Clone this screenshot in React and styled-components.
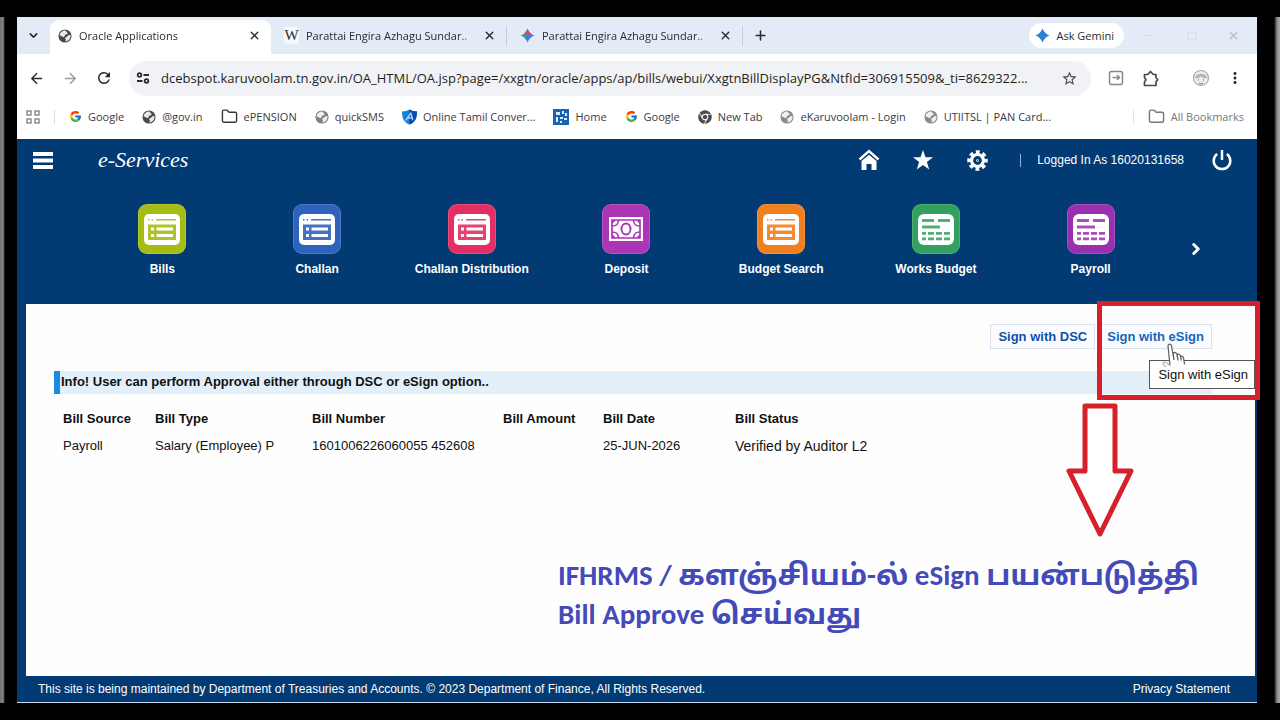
import React from "react";
import styled, { createGlobalStyle } from "styled-components";
import { FcGoogle } from "react-icons/fc";
import { FaChrome } from "react-icons/fa";
import { MdArrowBack, MdArrowForward, MdRefresh, MdStarBorder, MdMoreVert } from "react-icons/md";
import { ChevronDown, ChevronRight, Folder, Plus, X } from "lucide-react";

const GlobalStyle = createGlobalStyle`
  * {
    box-sizing: border-box;
  }
  body {
    margin: 0;
    background: #000;
  }
  button, input {
    font: inherit;
    color: inherit;
    border: 0;
    padding: 0;
    background: none;
  }
  a {
    color: inherit;
    text-decoration: none;
  }
  svg {
    display: block;
    flex: none;
  }
`;

const Device = styled.div`
  min-height: 100vh;
  display: flex;
  flex-direction: column;
  background: #000;
  border: solid #000;
  border-width: 17px 0;
`;
const Bezel = styled.div`
  flex: 1;
  display: flex;
  padding: 0 23px 0 17px;
  background:
    linear-gradient(to right, #6f6f6f 0, #8a8a8a 3px, #000 5px) left / 17px 100% no-repeat,
    linear-gradient(to left, #a8a8a8 0, #8a8a8a 3px, #000 6px) right / 23px 100% no-repeat;
`;
const Screen = styled.div`
  flex: 1;
  min-width: 0;
  display: flex;
  flex-direction: column;
  background: #fff;
  border-bottom: 1px solid #c9d8ea;
`;

/* browser */
const Browser = styled.header`
  font-family: "Open Sans", "Noto Sans", sans-serif;
  font-size: 11px;
  color: #2b2b2e;
`;
const TabStrip = styled.div`
  height: 37px;
  display: flex;
  align-items: center;
  background: #e3ebf7;
`;
const TabSearch = styled.button`
  width: 33px;
  height: 37px;
  display: grid;
  place-items: center;
`;
const Tab = styled.div`
  width: ${({ $active }) => ($active ? 221 : 236)}px;
  height: ${({ $active }) => ($active ? 34 : 20)}px;
  align-self: ${({ $active }) => ($active ? "flex-end" : "center")};
  display: flex;
  align-items: center;
  gap: 7px;
  padding: 0 8px ${({ $active }) => ($active ? 3 : 0)}px ${({ $active }) => ($active ? 8 : 13)}px;
  border-radius: ${({ $active }) => ($active ? "9px 9px 0 0" : 0)};
  background: ${({ $active }) => ($active ? "#fff" : "none")};
  border-right: ${({ $active }) => ($active ? 0 : "1px solid #c6cfdd")};
`;
const TabTitle = styled.span`
  flex: 1;
  white-space: nowrap;
  mask-image: linear-gradient(to left, transparent 0, #000 12px);
`;
const Wiki = styled.span`
  width: 15px;
  font: 15px "Liberation Serif", serif;
  text-align: center;
  background: #f6f8fb;
  border-radius: 3px;
`;
const IconButton = styled.button`
  width: ${({ $width }) => $width || 18}px;
  height: 20px;
  display: grid;
  align-items: center;
  justify-items: ${({ $align }) => $align || "center"};
  color: ${({ $color }) => $color || "#2b2b2e"};
`;
const Spacer = styled.div`
  flex: 1;
`;
const AskGemini = styled.button`
  height: 25px;
  display: flex;
  align-items: center;
  gap: 7px;
  padding: 0 10px 0 6px;
  margin-right: 11px;
  border-radius: 13px;
  background: #fff;
`;
const Toolbar = styled.div`
  height: 48px;
  display: flex;
  align-items: center;
  padding: 0 13px 0 10px;
  gap: 16px;
`;
const AddressBar = styled.label`
  flex: 1;
  min-width: 0;
  height: 35px;
  display: flex;
  align-items: center;
  gap: 11px;
  padding: 0 13px 0 7px;
  border-radius: 18px;
  background: #f1f2f5;
`;
const Address = styled.input`
  flex: 1;
  min-width: 0;
  font-size: 13px;
  color: #1f1f22;
  outline: 0;
`;
const Bookmarks = styled.nav`
  height: 37px;
  display: flex;
  align-items: center;
  gap: 14px;
  padding: 0 13px 8px 9px;
  white-space: nowrap;
`;
const BookmarkList = styled.div`
  flex: 1;
  display: flex;
  align-items: center;
  gap: 18px;
`;
const Bookmark = styled.a`
  display: flex;
  align-items: center;
  gap: 6px;
  color: ${({ $muted }) => ($muted ? "#77777b" : "#3a3a3d")};
`;
const Rule = styled.span`
  width: ${({ $width }) => $width || 1}px;
  height: ${({ $height }) => $height}px;
  background: ${({ $color }) => $color};
`;

/* application */
const Portal = styled.div`
  flex: 1;
  display: flex;
  flex-direction: column;
  background: #023a74;
  color: #fff;
  font-family: "Liberation Sans", Arial, sans-serif;
  font-size: 12px;
`;
const AppBar = styled.div`
  height: 42px;
  display: flex;
  align-items: center;
  padding: 0 24px 0 15px;
`;
const Brand = styled.h1`
  flex: 1;
  margin: 0 0 0 44px;
  font: italic 22px "Liberation Serif", serif;
`;
const BarIcons = styled.div`
  display: flex;
  align-items: center;
  gap: 32px;
`;
const BarButton = styled.button`
  width: 22px;
  height: 22px;
  display: grid;
  place-items: center;
`;
const LoggedIn = styled.span`
  margin: 0 27px 0 16px;
`;
const Launcher = styled.nav`
  display: flex;
  height: 123px;
  padding: 23px 50px 0 68px;
`;
const Tiles = styled.div`
  flex: 1;
  display: grid;
  grid-template-columns: repeat(7, 1fr);
  align-items: start;
`;
const TileLink = styled.a`
  display: flex;
  flex-direction: column;
  align-items: center;
  gap: 7px;
  font-weight: bold;
  line-height: 16px;
  white-space: nowrap;
`;
const TileIcon = styled.span`
  width: 48px;
  height: 50px;
  display: grid;
  place-items: center;
  border-radius: 9px;
  background: ${({ $color }) => $color};
  box-shadow: inset 0 0 0 1px rgba(255, 255, 255, 0.15);
`;
const NextButton = styled.button`
  width: 39px;
  height: 90px;
  display: flex;
  align-items: center;
  justify-content: flex-end;
  padding-right: 2px;
`;
const Panel = styled.main`
  position: relative;
  flex: 1;
  margin: 0 2px 0 9px;
  padding: 20px 43px 0 28px;
  background: #fefefe;
  color: #111;
`;
const Actions = styled.div`
  display: flex;
  justify-content: flex-end;
`;
const SignButton = styled.button`
  height: 25px;
  padding: 0 7px;
  border: 1px solid #d9e2ee;
  background: #fafcff;
  color: ${({ $hover }) => ($hover ? "#1766bb" : "#114fa8")};
  font-size: 13px;
  font-weight: bold;
  line-height: 22px;
  & + & {
    margin-left: 4px;
  }
`;
const Info = styled.p`
  margin: 22px 0 11px;
  height: 23px;
  padding-left: 1px;
  border-left: 6px solid #1a8be0;
  background: #e3eff9;
  font-size: 13px;
  font-weight: bold;
  line-height: 21px;
`;
const BillTable = styled.table`
  width: 100%;
  table-layout: fixed;
  border-collapse: collapse;
  font-size: 13px;
  th, td {
    height: 27px;
    padding: 0 0 0 9px;
    text-align: left;
    white-space: nowrap;
  }
`;
const Col = styled.col`
  width: ${({ $width }) => $width};
`;
const Cell = styled.td`
  font-size: ${({ $large }) => ($large ? 14 : 13)}px;
`;
const Footer = styled.footer`
  height: 26px;
  display: flex;
  align-items: center;
  justify-content: space-between;
  padding: 0 27px 0 21px;
`;

/* marks drawn over the panel */
const Tooltip = styled.div`
  position: absolute;
  top: 56px;
  right: 0;
  height: 29px;
  padding: 0 6px 0 8px;
  border: 1px solid #555;
  background: #fff;
  font-size: 13px;
  line-height: 27px;
`;
const Pointer = styled.svg`
  position: absolute;
  top: 39px;
  right: 68px;
`;
const Highlight = styled.div`
  position: absolute;
  top: -3px;
  right: -5px;
  width: 163px;
  height: 99px;
  border: 5px solid #d8202c;
`;
const Arrow = styled.svg`
  position: absolute;
  top: 98px;
  right: 121px;
`;
const Caption = styled.p`
  position: absolute;
  top: 252px;
  left: calc(100% - 697px);
  margin: 0;
  color: #444ab8;
  font: bold 29px / 39px Carlito, Lato, "Noto Sans Tamil", sans-serif;
  white-space: nowrap;
`;

const Globe = ({ color = "#4a4a4d", size = 14 }) => (
  <svg width={size} height={size} viewBox="0 0 16 16">
    <circle cx="8" cy="8" r="7.5" fill={color} />
    <path
      d="M8.5 1.6C5 1.6 2.2 4 1.8 7.2l3.4 1.6c1.4.5 2.8.2 2.6-1.3-.1-.8.6-1.2 1.6-1.3 1.5-.2 1.8-1 1.2-2zM14.3 7.2c-1.2-.7-2.2-.2-3 .5-.7.7-1 1.4-2 1.6-1.4.3-1.4 1.3-.6 2 .5.5.3 1.7-.3 2.9 3.6 0 6.2-3.2 5.9-7z"
      fill="#fff"
      opacity=".88"
    />
  </svg>
);

const Spark = ({ multi }) => (
  <svg width="15" height="15" viewBox="0 0 16 16">
    <defs>
      <linearGradient id="spark" x1="0" y1=".2" x2="1" y2=".6">
        <stop offset="0" stopColor="#f0b52b" />
        <stop offset=".3" stopColor="#35a866" />
        <stop offset=".55" stopColor="#3c7fe8" />
        <stop offset="1" stopColor="#3d86ee" />
      </linearGradient>
    </defs>
    <path
      d="M8 .5C9.200 4 12 6.800 15.500 8 12 9.200 9.200 12 8 15.500 6.800 12 4 9.200 .5 8 4 6.800 6.800 4 8 .5z"
      fill={multi ? "url(#spark)" : "#2f80d0"}
    />
    {multi && <path d="M8 .5C8.800 3.500 10 5.200 12 6.600L8 7.500 5.500 5.400C7 4.200 7.600 2.500 8 .5z" fill="#e2475b" />}
  </svg>
);

const Shield = () => (
  <svg width="15" height="16" viewBox="0 0 16 16">
    <path d="M8 0c2 1.400 5 2 8 2 0 7-2 11.500-8 14C2 13.500 0 9 0 2c3 0 6-.6 8-2z" fill="#1583e0" />
    <path d="M8 0c2 1.400 5 2 8 2 0 7-2 11.500-8 14z" fill="#0a4cae" />
    <path d="M4 11.500 9.500 4l2 7.500M6 9h5" fill="none" stroke="#bfe4ff" strokeWidth="1.300" />
  </svg>
);

const HomeSite = () => (
  <svg width="16" height="16" viewBox="0 0 16 16">
    <path d="M0 0h16v16H0z" fill="#1763b8" />
    <path d="M3 3h4v3H3zM9 2h2v3H9zM12 4h2v3h-2zM3 8h2v5H3zM7 8h3v2H7zM11 9h3v2h-3zM7 12h2v2H7z" fill="#d8ecff" />
  </svg>
);

const AppsGrid = () => (
  <svg width="14" height="14" viewBox="0 0 14 14" fill="none" stroke="#8f8f93" strokeWidth="1.500">
    <path d="M1 1h4v4H1zM9 1h4v4H9zM1 9h4v4H1zM9 9h4v4H9z" />
  </svg>
);

const SiteInfo = () => (
  <svg width="14" height="14" viewBox="0 0 14 14" fill="none" stroke="#2b2b2e" strokeWidth="1.800">
    <circle cx="3.500" cy="4" r="1.800" />
    <circle cx="10.500" cy="10" r="1.800" />
    <path d="M7.500 4H13M1 10h5.500" />
  </svg>
);

const SaveIcon = () => (
  <svg width="16" height="16" viewBox="0 0 16 16" fill="none" stroke="#88888c" strokeWidth="1.500">
    <rect x="1.500" y="1.500" width="13" height="13" rx="2" />
    <path d="M4.500 7.500h7M9 5l2.500 2.500L9 10" />
  </svg>
);

const Extension = () => (
  <svg width="17" height="17" viewBox="0 0 17 17" fill="none" stroke="#4b4b4f" strokeWidth="1.700" strokeLinejoin="round">
    <path d="M2.500 4.500h3.200L8.500 1.500l2.800 3H14v3.300l1.800 2-1.800 2v3.700H2.500v-3.800l1.500-1.900-1.500-2z" />
  </svg>
);

const Avatar = () => (
  <svg width="18" height="18" viewBox="0 0 18 18">
    <circle cx="9" cy="9" r="7.500" fill="#ededee" stroke="#a9a9ac" strokeWidth="1.200" />
    <path d="M3 9c1-5 11-6 12 0-4 1-5-1-6-2-1 2-3 3-6 2z" fill="#b5b5b8" />
    <path d="M6 11h1M11 11h1M7 14c1 1 3 1 4 0" stroke="#909094" strokeWidth="1.400" fill="none" />
  </svg>
);

const Menu = () => (
  <svg width="20" height="17" viewBox="0 0 20 17" fill="#fff">
    <path d="M0 0h20v4H0zM0 6.500h20v4H0zM0 13h20v4H0z" />
  </svg>
);

const Home = () => (
  <svg width="22" height="22" viewBox="0 0 22 22">
    <path d="M1.500 10.500 11 2.200l9.500 8.300" fill="none" stroke="#fff" strokeWidth="2.400" />
    <path d="M11 5.800 18.500 12v9h-5v-6h-5v6h-5v-9z" fill="#fff" />
  </svg>
);

const Star = () => (
  <svg width="20" height="20" viewBox="0 0 20 20">
    <path d="m10 0 2.500 7.300H20l-6.100 4.600 2.300 7.600L10 15l-6.200 4.500 2.300-7.600L0 7.300h7.500z" fill="#fff" />
  </svg>
);

const Gear = () => (
  <svg width="21" height="21" viewBox="0 0 21 21" fill="none" stroke="#fff">
    <circle cx="10.500" cy="10.500" r="8.500" strokeWidth="3.500" strokeDasharray="3.800 2.876" strokeDashoffset="1.900" />
    <circle cx="10.500" cy="10.500" r="6" strokeWidth="3.200" />
    <circle cx="10.500" cy="10.500" r="1" strokeWidth="1" />
  </svg>
);

const Power = () => (
  <svg width="20" height="21" viewBox="0 0 20 21" fill="none" stroke="#fff" strokeWidth="2.500">
    <path d="M5.200 4a8.300 8.300 0 1 0 9.600 0M10 0v10" />
  </svg>
);

const ListGlyph = ({ color }) => (
  <svg width="36" height="31" viewBox="0 0 36 31">
    <rect width="36" height="31" rx="5" fill="#fff" />
    <path d="M4 5h1.500v1.500H4zM7.500 5H9v1.500H7.500zM12 5h20v1.500H12zM4 10.500h28V26H4z" fill={color} opacity=".9" />
    <path d="M7 13.500h3v3H7zM12.500 13.500H29v3H12.500zM7 20h3v3H7zM12.500 20H29v3H12.500z" fill="#fff" />
  </svg>
);

const NoteGlyph = ({ color }) => (
  <svg width="34" height="24" viewBox="0 0 34 24">
    <path d="M0 0h34v24H0z" fill="#fff" />
    <path
      d="M3 3h28v18H3zM3.500 9C8 9 9 7 9.500 3.500M24.500 3.500C25 7 26 9 30.500 9M3.500 15c4.500 0 5.500 2 6 5.500M24.500 20.500c.5-3.500 1.500-5.500 6-5.500"
      fill="none"
      stroke={color}
      strokeWidth="1.700"
    />
    <path d="M3 3h4L3 7zM31 3h-4l4 4zM3 21h4l-4-4zM31 21h-4l4-4z" fill={color} />
    <ellipse cx="17" cy="12" rx="4.500" ry="5.500" fill="none" stroke={color} strokeWidth="1.900" />
  </svg>
);

const SheetGlyph = ({ color }) => (
  <svg width="36" height="31" viewBox="0 0 36 31">
    <rect width="36" height="31" rx="6" fill="#fff" />
    <path
      d="M4 5h12v3H4zM20 5h12v3H20zM4 11.500h18v3H4zM4 18h4v2.800H4zM10 18h6v2.800h-6zM18 18h6v2.800h-6zM26 18h6v2.800h-6zM4 23.500h4v2.800H4zM10 23.500h6v2.800h-6zM18 23.500h6v2.800h-6zM26 23.500h6v2.800h-6z"
      fill={color}
      opacity=".85"
    />
  </svg>
);

const tiles = [
  { label: "Bills", color: "#a5bd12", Glyph: ListGlyph },
  { label: "Challan", color: "#2f62bd", Glyph: ListGlyph },
  { label: "Challan Distribution", color: "#e32f63", Glyph: ListGlyph },
  { label: "Deposit", color: "#aa36b6", Glyph: NoteGlyph },
  { label: "Budget Search", color: "#f0801f", Glyph: ListGlyph },
  { label: "Works Budget", color: "#32a05e", Glyph: SheetGlyph },
  { label: "Payroll", color: "#9a30ae", Glyph: SheetGlyph },
];

const bookmarks = [
  { label: "Google", icon: <FcGoogle size={13} /> },
  { label: "@gov.in", icon: <Globe /> },
  { label: "ePENSION", icon: <Folder size={17} strokeWidth={2} /> },
  { label: "quickSMS", icon: <Globe color="#808084" /> },
  { label: "Online Tamil Conver...", icon: <Shield /> },
  { label: "Home", icon: <HomeSite /> },
  { label: "Google", icon: <FcGoogle size={13} /> },
  { label: "New Tab", icon: <FaChrome size={14} color="#4d4d50" /> },
  { label: "eKaruvoolam - Login", icon: <Globe color="#8b8b8f" /> },
  { label: "UTIITSL | PAN Card...", icon: <Globe color="#8b8b8f" /> },
];

const columns = [
  { label: "Bill Source", value: "Payroll", width: "92px" },
  { label: "Bill Type", value: "Salary (Employee) P", width: "157px" },
  { label: "Bill Number", value: "1601006226060055 452608", width: "191px" },
  { label: "Bill Amount", value: "", width: "100px" },
  { label: "Bill Date", value: "25-JUN-2026", width: "132px" },
  { label: "Bill Status", value: "Verified by Auditor L2", width: "auto", large: true },
];

const url =
  "dcebspot.karuvoolam.tn.gov.in/OA_HTML/OA.jsp?page=/xxgtn/oracle/apps/ap/bills/webui/XxgtnBillDisplayPG&NtfId=306915509&_ti=8629322...";

function BrowserTab({ icon, title, active }) {
  return (
    <Tab $active={active}>
      {icon}
      <TabTitle>{title}</TabTitle>
      <IconButton aria-label="Close tab">
        <X size={13} strokeWidth={2.5} />
      </IconButton>
    </Tab>
  );
}

export default function App() {
  return (
    <Device>
      <GlobalStyle />
      <Bezel>
        <Screen>
          <Browser>
            <TabStrip>
              <TabSearch aria-label="Search tabs">
                <ChevronDown size={13} strokeWidth={3} />
              </TabSearch>
              <BrowserTab active icon={<Globe />} title="Oracle Applications" />
              <BrowserTab icon={<Wiki>W</Wiki>} title="Parattai Engira Azhagu Sundar.." />
              <BrowserTab icon={<Spark multi />} title="Parattai Engira Azhagu Sundar.." />
              <IconButton $width={34} aria-label="New tab">
                <Plus size={15} strokeWidth={2.5} />
              </IconButton>
              <Spacer />
              <AskGemini>
                <Spark />
                Ask Gemini
              </AskGemini>
              <IconButton $width={22} aria-label="Minimize">
                <Rule $width={9} $height={1} $color="#d6deea" />
              </IconButton>
              <IconButton $width={70} $color="#d3dae5" aria-label="Maximize">
                <svg width="10" height="10" viewBox="0 0 10 10">
                  <rect x="1" y="1" width="8" height="8" rx="2" fill="none" stroke="currentColor" />
                </svg>
              </IconButton>
              <IconButton $width={30} $align="start" $color="#b3bac6" aria-label="Close window">
                <X size={13} />
              </IconButton>
            </TabStrip>
            <Toolbar>
              <IconButton aria-label="Back">
                <MdArrowBack size={17} />
              </IconButton>
              <IconButton $color="#9b9b9f" aria-label="Forward">
                <MdArrowForward size={17} />
              </IconButton>
              <IconButton aria-label="Reload">
                <MdRefresh size={18} />
              </IconButton>
              <AddressBar>
                <SiteInfo />
                <Address aria-label="Address" defaultValue={url} />
                <MdStarBorder size={17} color="#4b4b4f" />
              </AddressBar>
              <IconButton aria-label="Save">
                <SaveIcon />
              </IconButton>
              <IconButton aria-label="Extensions">
                <Extension />
              </IconButton>
              <IconButton $width={35} $align="end" aria-label="Profile">
                <Avatar />
              </IconButton>
              <IconButton aria-label="More">
                <MdMoreVert size={18} />
              </IconButton>
            </Toolbar>
            <Bookmarks>
              <AppsGrid />
              <Rule $height={14} $color="#d9dade" />
              <BookmarkList>
                {bookmarks.map(({ label, icon }, i) => (
                  <Bookmark key={i} href="#">
                    {icon}
                    {label}
                  </Bookmark>
                ))}
              </BookmarkList>
              <Rule $height={14} $color="#e3e4e7" />
              <Bookmark href="#" $muted>
                <Folder size={17} strokeWidth={2} />
                All Bookmarks
              </Bookmark>
            </Bookmarks>
          </Browser>
          <Portal>
            <AppBar>
              <BarButton aria-label="Menu">
                <Menu />
              </BarButton>
              <Brand>e-Services</Brand>
              <BarIcons>
                <BarButton aria-label="Home">
                  <Home />
                </BarButton>
                <BarButton aria-label="Favorites">
                  <Star />
                </BarButton>
                <BarButton aria-label="Settings">
                  <Gear />
                </BarButton>
                <Rule $height={13} $color="#8fb0d2" />
              </BarIcons>
              <LoggedIn>Logged In As 16020131658</LoggedIn>
              <BarButton aria-label="Logout">
                <Power />
              </BarButton>
            </AppBar>
            <Launcher>
              <Tiles>
                {tiles.map(({ label, color, Glyph }) => (
                  <TileLink key={label} href="#">
                    <TileIcon $color={color}>
                      <Glyph color={color} />
                    </TileIcon>
                    {label}
                  </TileLink>
                ))}
              </Tiles>
              <NextButton aria-label="Next">
                <ChevronRight size={18} strokeWidth={4} />
              </NextButton>
            </Launcher>
            <Panel>
              <Actions>
                <SignButton>Sign with DSC</SignButton>
                <SignButton $hover>Sign with eSign</SignButton>
              </Actions>
              <Info>Info! User can perform Approval either through DSC or eSign option..</Info>
              <BillTable>
                <colgroup>
                  {columns.map(({ label, width }) => (
                    <Col key={label} $width={width} />
                  ))}
                </colgroup>
                <thead>
                  <tr>
                    {columns.map(({ label }) => (
                      <th key={label}>{label}</th>
                    ))}
                  </tr>
                </thead>
                <tbody>
                  <tr>
                    {columns.map(({ label, value, large }) => (
                      <Cell key={label} $large={large}>
                        {value}
                      </Cell>
                    ))}
                  </tr>
                </tbody>
              </BillTable>
              <Tooltip role="tooltip">Sign with eSign</Tooltip>
              <Pointer width="26" height="36" viewBox="0 0 26 36">
                <path
                  d="M7 3c0-2.500 3-2.500 3.500 0l2 7c1.500-1 3-.5 3.500 1 1.500-.7 2.700 0 3.200 1.300 1.800-.5 3 .5 3.300 2.500 1 5 1.500 8.200-.5 11.200L11 27 2 21c-.5-2 1.500-2.500 3-1.500L8.500 22z"
                  fill="#fff"
                />
                <path
                  d="M9 22.500 7 3c0-2.500 3-2.500 3.500 0L13 17l-.8-7c1.300-1 3-.5 3.600 1l1.200 6.500-.8-6c1.300-.8 2.700-.3 3.200 1.200l.9 4.800-.6-4.200c1.500-.5 2.600.5 2.900 2l1 6"
                  fill="none"
                  stroke="#5c5c5c"
                  strokeWidth="1.200"
                />
                <path d="M9 22.500 5 19.500c-1.500-1-3.500-.5-3 1.500l3 3" fill="none" stroke="#b4b4b4" strokeWidth="1.200" />
              </Pointer>
              <Highlight />
              <Arrow width="68" height="136" viewBox="0 0 68 136">
                <path
                  d="M19 4h30v65h16L34 132 3 69h16z"
                  fill="#fff"
                  stroke="#d8202c"
                  strokeWidth="5"
                  strokeLinejoin="round"
                />
              </Arrow>
              <Caption>
                IFHRMS / களஞ்சியம்-ல் eSign பயன்படுத்தி
                <br />
                Bill Approve செய்வது
              </Caption>
            </Panel>
            <Footer>
              <span>
                This site is being maintained by Department of Treasuries and Accounts. © 2023 Department of Finance, All
                Rights Reserved.
              </span>
              <a href="#">Privacy Statement</a>
            </Footer>
          </Portal>
        </Screen>
      </Bezel>
    </Device>
  );
}
